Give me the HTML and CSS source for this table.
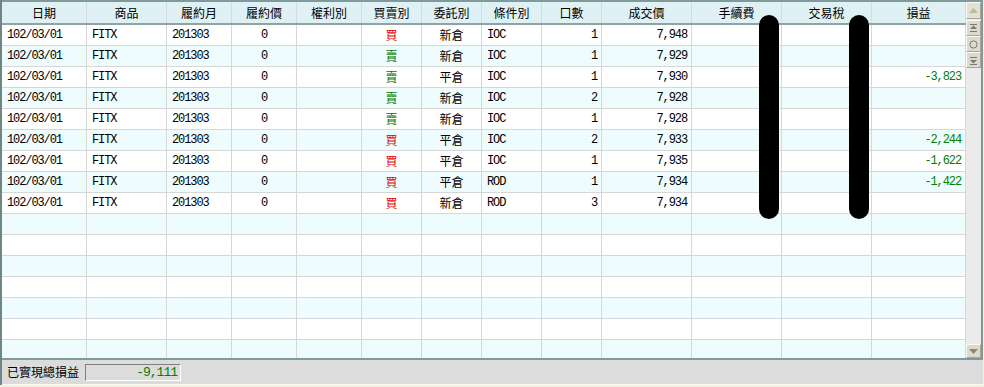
FILE: index.html
```html
<!DOCTYPE html>
<html lang="zh-Hant">
<head>
<meta charset="utf-8">
<title>已實現損益</title>
<link rel="stylesheet" href="styles.css">
</head>
<body>
<div class="window">
  <div class="grid-frame">
    <div class="grid">
      <div class="row head">
        <div class="c">日期</div><div class="c">商品</div><div class="c">履約月</div><div class="c">履約價</div><div class="c">權利別</div><div class="c">買賣別</div><div class="c">委託別</div><div class="c">條件別</div><div class="c">口數</div><div class="c">成交價</div><div class="c">手續費</div><div class="c">交易稅</div><div class="c">損益</div>
      </div>
      <div class="row">
        <div class="c l n">102/03/01</div><div class="c l n">FITX</div><div class="c l n">201303</div><div class="c m n">0</div><div class="c"></div><div class="c m buy">買</div><div class="c m">新倉</div><div class="c l n">IOC</div><div class="c r n">1</div><div class="c r n">7,948</div><div class="c"></div><div class="c"></div><div class="c r n pl"></div>
      </div>
      <div class="row">
        <div class="c l n">102/03/01</div><div class="c l n">FITX</div><div class="c l n">201303</div><div class="c m n">0</div><div class="c"></div><div class="c m sell">賣</div><div class="c m">新倉</div><div class="c l n">IOC</div><div class="c r n">1</div><div class="c r n">7,929</div><div class="c"></div><div class="c"></div><div class="c r n pl"></div>
      </div>
      <div class="row">
        <div class="c l n">102/03/01</div><div class="c l n">FITX</div><div class="c l n">201303</div><div class="c m n">0</div><div class="c"></div><div class="c m sell">賣</div><div class="c m">平倉</div><div class="c l n">IOC</div><div class="c r n">1</div><div class="c r n">7,930</div><div class="c"></div><div class="c"></div><div class="c r n pl">-3,823</div>
      </div>
      <div class="row">
        <div class="c l n">102/03/01</div><div class="c l n">FITX</div><div class="c l n">201303</div><div class="c m n">0</div><div class="c"></div><div class="c m sell">賣</div><div class="c m">新倉</div><div class="c l n">IOC</div><div class="c r n">2</div><div class="c r n">7,928</div><div class="c"></div><div class="c"></div><div class="c r n pl"></div>
      </div>
      <div class="row">
        <div class="c l n">102/03/01</div><div class="c l n">FITX</div><div class="c l n">201303</div><div class="c m n">0</div><div class="c"></div><div class="c m sell">賣</div><div class="c m">新倉</div><div class="c l n">IOC</div><div class="c r n">1</div><div class="c r n">7,928</div><div class="c"></div><div class="c"></div><div class="c r n pl"></div>
      </div>
      <div class="row">
        <div class="c l n">102/03/01</div><div class="c l n">FITX</div><div class="c l n">201303</div><div class="c m n">0</div><div class="c"></div><div class="c m buy">買</div><div class="c m">平倉</div><div class="c l n">IOC</div><div class="c r n">2</div><div class="c r n">7,933</div><div class="c"></div><div class="c"></div><div class="c r n pl">-2,244</div>
      </div>
      <div class="row">
        <div class="c l n">102/03/01</div><div class="c l n">FITX</div><div class="c l n">201303</div><div class="c m n">0</div><div class="c"></div><div class="c m buy">買</div><div class="c m">平倉</div><div class="c l n">IOC</div><div class="c r n">1</div><div class="c r n">7,935</div><div class="c"></div><div class="c"></div><div class="c r n pl">-1,622</div>
      </div>
      <div class="row">
        <div class="c l n">102/03/01</div><div class="c l n">FITX</div><div class="c l n">201303</div><div class="c m n">0</div><div class="c"></div><div class="c m buy">買</div><div class="c m">平倉</div><div class="c l n">ROD</div><div class="c r n">1</div><div class="c r n">7,934</div><div class="c"></div><div class="c"></div><div class="c r n pl">-1,422</div>
      </div>
      <div class="row">
        <div class="c l n">102/03/01</div><div class="c l n">FITX</div><div class="c l n">201303</div><div class="c m n">0</div><div class="c"></div><div class="c m buy">買</div><div class="c m">新倉</div><div class="c l n">ROD</div><div class="c r n">3</div><div class="c r n">7,934</div><div class="c"></div><div class="c"></div><div class="c r n pl"></div>
      </div>
      <div class="row"><div class="c"></div><div class="c"></div><div class="c"></div><div class="c"></div><div class="c"></div><div class="c"></div><div class="c"></div><div class="c"></div><div class="c"></div><div class="c"></div><div class="c"></div><div class="c"></div><div class="c"></div></div>
      <div class="row"><div class="c"></div><div class="c"></div><div class="c"></div><div class="c"></div><div class="c"></div><div class="c"></div><div class="c"></div><div class="c"></div><div class="c"></div><div class="c"></div><div class="c"></div><div class="c"></div><div class="c"></div></div>
      <div class="row"><div class="c"></div><div class="c"></div><div class="c"></div><div class="c"></div><div class="c"></div><div class="c"></div><div class="c"></div><div class="c"></div><div class="c"></div><div class="c"></div><div class="c"></div><div class="c"></div><div class="c"></div></div>
      <div class="row"><div class="c"></div><div class="c"></div><div class="c"></div><div class="c"></div><div class="c"></div><div class="c"></div><div class="c"></div><div class="c"></div><div class="c"></div><div class="c"></div><div class="c"></div><div class="c"></div><div class="c"></div></div>
      <div class="row"><div class="c"></div><div class="c"></div><div class="c"></div><div class="c"></div><div class="c"></div><div class="c"></div><div class="c"></div><div class="c"></div><div class="c"></div><div class="c"></div><div class="c"></div><div class="c"></div><div class="c"></div></div>
      <div class="row"><div class="c"></div><div class="c"></div><div class="c"></div><div class="c"></div><div class="c"></div><div class="c"></div><div class="c"></div><div class="c"></div><div class="c"></div><div class="c"></div><div class="c"></div><div class="c"></div><div class="c"></div></div>
      <div class="row"><div class="c"></div><div class="c"></div><div class="c"></div><div class="c"></div><div class="c"></div><div class="c"></div><div class="c"></div><div class="c"></div><div class="c"></div><div class="c"></div><div class="c"></div><div class="c"></div><div class="c"></div></div>
    </div>
    <div class="scrollbar">
      <div class="sb-btn sb-up">
        <svg width="9" height="5" viewBox="0 0 9 5"><path d="M0 5 L4.5 0 L9 5 Z" fill="#bdb9ab"/></svg>
      </div>
      <div class="sb-btn">
        <svg width="9" height="9" viewBox="0 0 9 9"><rect x="1" y="0" width="7" height="1" fill="#7c7a70"/><path d="M1 5 L4.5 1.5 L8 5 Z" fill="#7c7a70"/><rect x="1" y="7" width="7" height="1" fill="#7c7a70"/></svg>
      </div>
      <div class="sb-btn">
        <svg width="9" height="9" viewBox="0 0 9 9"><circle cx="4.5" cy="4.5" r="3.6" fill="none" stroke="#7c7a70" stroke-width="1"/></svg>
      </div>
      <div class="sb-btn">
        <svg width="9" height="9" viewBox="0 0 9 9"><rect x="1" y="1" width="7" height="1" fill="#7c7a70"/><path d="M1 4 L4.5 7.5 L8 4 Z" fill="#7c7a70"/><rect x="1" y="8" width="7" height="1" fill="#7c7a70"/></svg>
      </div>
      <div class="sb-track"></div>
      <div class="sb-btn sb-down">
        <svg width="9" height="5" viewBox="0 0 9 5"><path d="M0 0 L4.5 5 L9 0 Z" fill="#8c887a"/></svg>
      </div>
    </div>
  </div>
  <div class="status">
    <span class="status-label">已實現總損益</span>
    <span class="status-box">-9,111</span>
  </div>
  <div class="redact redact-fee"></div>
  <div class="redact redact-tax"></div>
</div>
</body>
</html>
```

FILE: styles.css
```css
html, body {
  margin: 0;
  padding: 0;
}
body {
  width: 984px;
  height: 387px;
  background: #f1f1e1;
  overflow: hidden;
  font-family: "Noto Sans CJK TC", "Noto Sans CJK SC", sans-serif;
  font-size: 12px;
  color: #000;
}
.window {
  position: relative;
  width: 981px;
  border-left: 2px solid #6f8686;
  display: flex;
  flex-direction: column;
}
.grid-frame {
  display: flex;
  height: 356px;
  border-top: 2px solid #7f9a9a;
  border-right: 2px solid #7f9a9a;
  border-bottom: 2px solid #7f9a9a;
  background: #fff;
}
.grid {
  width: 964px;
  height: 356px;
  overflow: hidden;
}
.row {
  display: grid;
  grid-template-columns: 85px 80px 65px 65px 65px 60px 60px 60px 60px 90px 90px 90px 94px;
  height: 21px;
  background: #fff;
}
.row:nth-child(odd) {
  background: #effcfd;
}
.row.head {
  height: 23px;
  background: #dff1f4;
  border-bottom: 2px solid #8fa3a3;
  box-sizing: border-box;
}
.c {
  box-sizing: border-box;
  height: 21px;
  line-height: 20px;
  border-right: 1px solid #d7d7d7;
  border-bottom: 1px solid #d7d7d7;
  white-space: nowrap;
  overflow: hidden;
}
.head .c {
  height: 21px;
  line-height: 21px;
  text-align: center;
  border-bottom: none;
  border-right: 1px solid #d0dcdd;
}
.c.l { text-align: left; padding-left: 5px; }
.c.r { text-align: right; padding-right: 4px; }
.c.m { text-align: center; }
.n {
  font-family: "Liberation Mono", "DejaVu Sans Mono", monospace;
  font-size: 12px;
  letter-spacing: -1.1px;
}
.buy { color: #e00000; }
.sell { color: #007a00; }
.pl { color: #008000; }

.scrollbar {
  width: 15px;
  display: flex;
  flex-direction: column;
  background: #ebebeb;
}
.sb-btn {
  box-sizing: border-box;
  height: 16px;
  display: flex;
  align-items: center;
  justify-content: center;
  background: #dcd9cd;
  border-top: 1px solid #fbfaf4;
  border-left: 1px solid #fbfaf4;
  border-right: 1px solid #a8a496;
  border-bottom: 1px solid #a8a496;
}
.sb-up {
  height: 17px;
  background: #e3e0d4;
  margin-bottom: 1px;
}
.sb-track {
  flex: 1;
}
.sb-down {
  height: 14px;
}

.status {
  height: 24px;
  background: #dcdcdc;
  border-bottom: 1px solid #fbfbf5;
  display: flex;
  align-items: center;
  gap: 6px;
  padding-left: 5px;
}
.status-label {
  line-height: 16px;
}
.status-box {
  box-sizing: border-box;
  width: 96px;
  height: 17px;
  line-height: 15px;
  text-align: right;
  padding-right: 3px;
  border-top: 1px solid #808080;
  border-left: 1px solid #808080;
  border-right: 1px solid #ffffff;
  border-bottom: 1px solid #ffffff;
  color: #008000;
  font-family: "Liberation Mono", "DejaVu Sans Mono", monospace;
  font-size: 13px;
  letter-spacing: -1px;
}

.redact {
  position: absolute;
  top: 15px;
  width: 20px;
  height: 204px;
  background: #000;
  border-radius: 10px;
}
.redact-fee { left: 757px; }
.redact-tax { left: 847px; }
```
